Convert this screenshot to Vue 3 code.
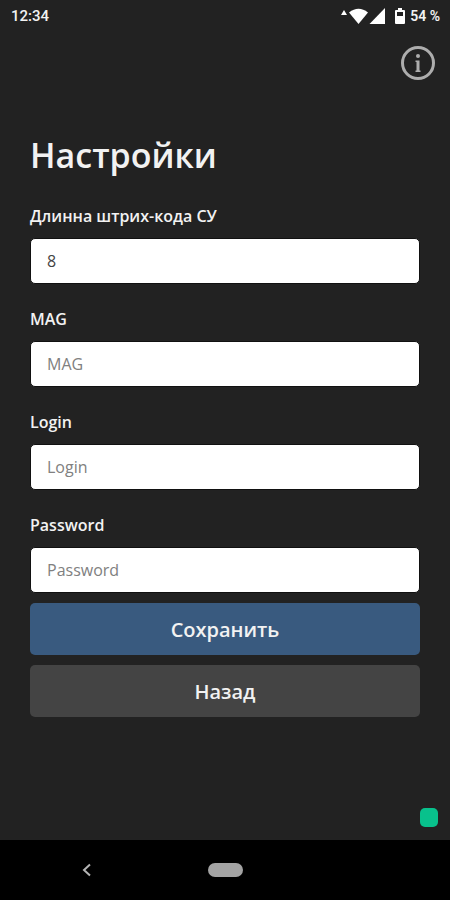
<script setup>
import { reactive } from 'vue'

const fields = reactive([
  { id: 'barcode', label: 'Длинна штрих-кода СУ', type: 'text', placeholder: '', value: '8' },
  { id: 'mag', label: 'MAG', type: 'text', placeholder: 'MAG', value: '' },
  { id: 'login', label: 'Login', type: 'text', placeholder: 'Login', value: '' },
  { id: 'password', label: 'Password', type: 'password', placeholder: 'Password', value: '' }
])
</script>

<template>
  <div class="screen">
    <header class="status">
      <time>12:34</time>
      <div class="indicators">
        <svg width="46" height="20" viewBox="0 0 46 20" aria-hidden="true">
          <path d="M3 4 L6 9 H0 Z" />
          <path d="M8 6.500 Q17.500 -1 27 6.500 L17.500 18 Z" />
          <path d="M44 2 V18 H28.500 Z" />
        </svg>
        <svg class="battery" width="10" height="18" viewBox="0 0 10 18" aria-hidden="true">
          <path fill-rule="evenodd" d="M3 1 H7 V3 H9 Q10 3 10 4 V16 Q10 17 9 17 H1 Q0 17 0 16 V4 Q0 3 1 3 H3 Z M2 5 V9 H8 V5 Z" />
        </svg>
        <span>54 %</span>
      </div>
    </header>

    <div class="toolbar">
      <button class="info" type="button" aria-label="Info">
        <svg width="34" height="34" viewBox="0 0 34 34" aria-hidden="true">
          <circle cx="17" cy="17" r="15.500" fill="none" stroke="currentColor" stroke-width="3" />
          <circle cx="17" cy="10" r="2" fill="currentColor" />
          <path d="M14.500 14.500 H18.500 V24.500 H19.500 V26 H14.500 V24.500 H15.500 V16 H14.500 Z" fill="currentColor" />
        </svg>
      </button>
    </div>

    <main class="content">
      <h1>Настройки</h1>
      <form @submit.prevent>
        <div class="fields">
          <div v-for="field in fields" :key="field.id" class="field">
            <label :for="field.id">{{ field.label }}</label>
            <input :id="field.id" v-model="field.value" :type="field.type" :placeholder="field.placeholder" autocomplete="off" />
          </div>
        </div>
        <div class="actions">
          <button class="primary" type="submit">Сохранить</button>
          <button class="secondary" type="button">Назад</button>
        </div>
      </form>
    </main>

    <div class="presence"><span class="dot"></span></div>

    <nav class="system-nav">
      <button type="button" aria-label="Back">
        <svg width="10" height="14" viewBox="0 0 10 14" aria-hidden="true">
          <path d="M8 1.500 L2 7 L8 12.500" fill="none" stroke="#b4b4b4" stroke-width="2" />
        </svg>
      </button>
      <button type="button" aria-label="Home"><span class="pill"></span></button>
    </nav>
  </div>
</template>

<style>
body {
  background: #222222;
}
</style>

<style scoped>
.screen {
  min-height: 100vh;
  display: flex;
  flex-direction: column;
  background: #222222;
  color: #f2f2f2;
  font-family: "Open Sans", "Noto Sans", sans-serif;
}

button {
  border: 0;
  padding: 0;
  background: none;
  color: inherit;
  font: inherit;
  cursor: pointer;
}

svg {
  display: block;
}

.status {
  height: 32px;
  padding: 0 10px 0 11px;
  display: flex;
  align-items: center;
  justify-content: space-between;
  font-family: Roboto, sans-serif;
  font-size: 15px;
  font-weight: 500;
}

.indicators {
  display: flex;
  align-items: center;
  gap: 5px;
  fill: #ffffff;
  font-size: 14px;
  font-weight: 600;
}

.battery {
  margin-left: 3px;
}

.toolbar {
  display: flex;
  justify-content: flex-end;
  padding: 14px 15px 0;
}

.info {
  color: #adadad;
}

.content {
  padding: 50px 30px 0;
}

h1 {
  margin: 0 0 25px;
  font-size: 34px;
  line-height: 50px;
  font-weight: 600;
}

.fields {
  display: grid;
  gap: 24px;
}

.field {
  display: grid;
  gap: 11px;
}

label {
  font-size: 16px;
  line-height: 22px;
  font-weight: 600;
}

input {
  box-sizing: border-box;
  width: 100%;
  height: 46px;
  padding: 0 16px;
  border: 1px solid #111111;
  border-radius: 5px;
  background: #ffffff;
  color: #444444;
  font-family: inherit;
  font-size: 16px;
}

input::placeholder {
  color: #808080;
  opacity: 1;
}

.actions {
  display: grid;
  gap: 10px;
  padding-top: 10px;
}

.actions button {
  height: 52px;
  border-radius: 5px;
  font-size: 20px;
  font-weight: 600;
}

.primary {
  background: #395a7f;
}

.secondary {
  background: #444444;
}

.presence {
  margin-top: auto;
  padding: 13px 12px;
  display: flex;
  justify-content: flex-end;
}

.dot {
  width: 18px;
  height: 19px;
  border-radius: 5px;
  background: #08c18c;
}

.system-nav {
  height: 60px;
  display: grid;
  grid-template-columns: 1fr auto 1fr;
  align-items: center;
  justify-items: center;
  background: #000000;
}

.system-nav button:first-child {
  padding-right: 34px;
}

.pill {
  display: block;
  width: 35px;
  height: 14px;
  border-radius: 7px;
  background: #a3a3a3;
}
</style>
